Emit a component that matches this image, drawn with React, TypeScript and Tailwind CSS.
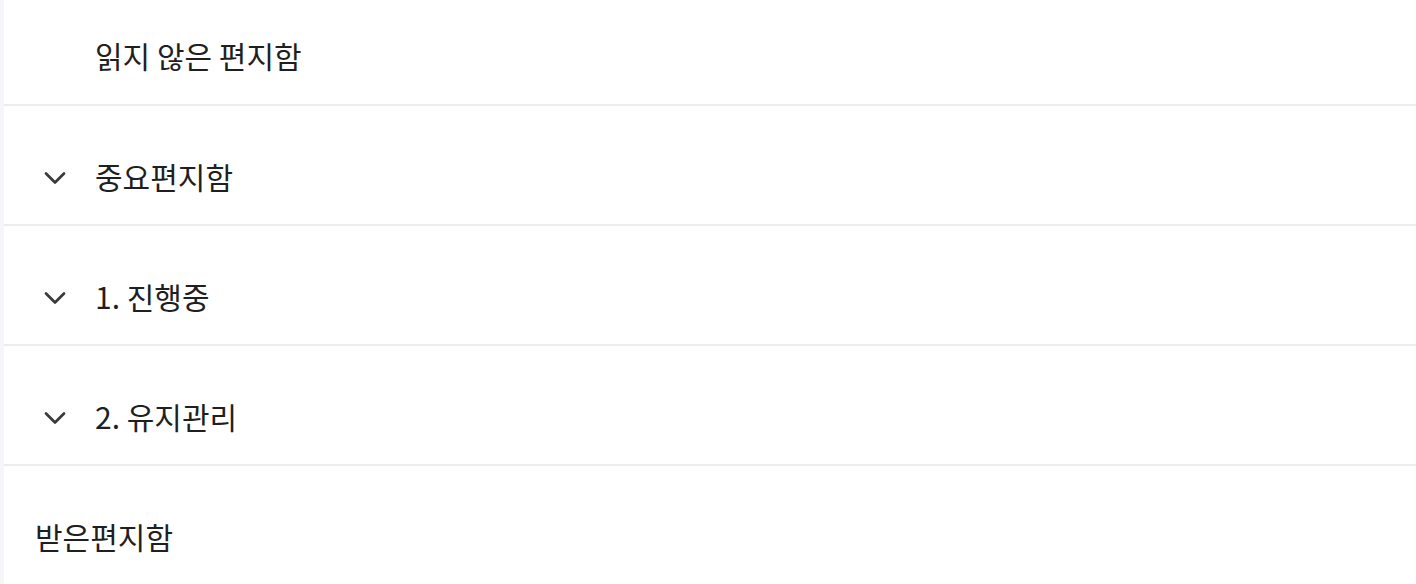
import { ChevronDown } from "lucide-react";

type Row = { label: string; chevron: boolean; indent: boolean };

const rows: Row[] = [
  { label: "중요편지함", chevron: true, indent: true },
  { label: "1. 진행중", chevron: true, indent: true },
  { label: "2. 유지관리", chevron: true, indent: true },
];

function FolderRow({ item }: { item: Row }) {
  return (
    <div className="h-[120px] border-b-2 border-[#ececf0] flex items-center pt-[22px]">
      <div className="w-[91px] shrink-0 flex justify-end pr-[22px] pt-[3px]">
        {item.chevron && <ChevronDown size={36} strokeWidth={1.8} className="text-[#3a3a3a]" />}
      </div>
      <span className="text-[30px] text-[#1f1f1f]">{item.label}</span>
    </div>
  );
}

export default function App() {
  return (
    <div
      className="w-[1416px] h-[584px] flex bg-white overflow-hidden"
      style={{ fontFamily: '"Noto Sans CJK KR", "Noto Sans", sans-serif' }}
    >
      <div className="w-[4px] shrink-0 bg-[#f4f6fa]" />
      <div className="flex-1 flex flex-col">
        <div className="h-[106px] border-b-2 border-[#ececf0] flex items-center pl-[91px] pt-[6px]">
          <span className="text-[30px] text-[#1f1f1f]">읽지 않은 편지함</span>
        </div>
        {rows.map((r) => (
          <FolderRow key={r.label} item={r} />
        ))}
        <div className="h-[118px] flex items-center pl-[31px] pt-[22px]">
          <span className="text-[30px] text-[#1f1f1f]">받은편지함</span>
        </div>
      </div>
    </div>
  );
}
